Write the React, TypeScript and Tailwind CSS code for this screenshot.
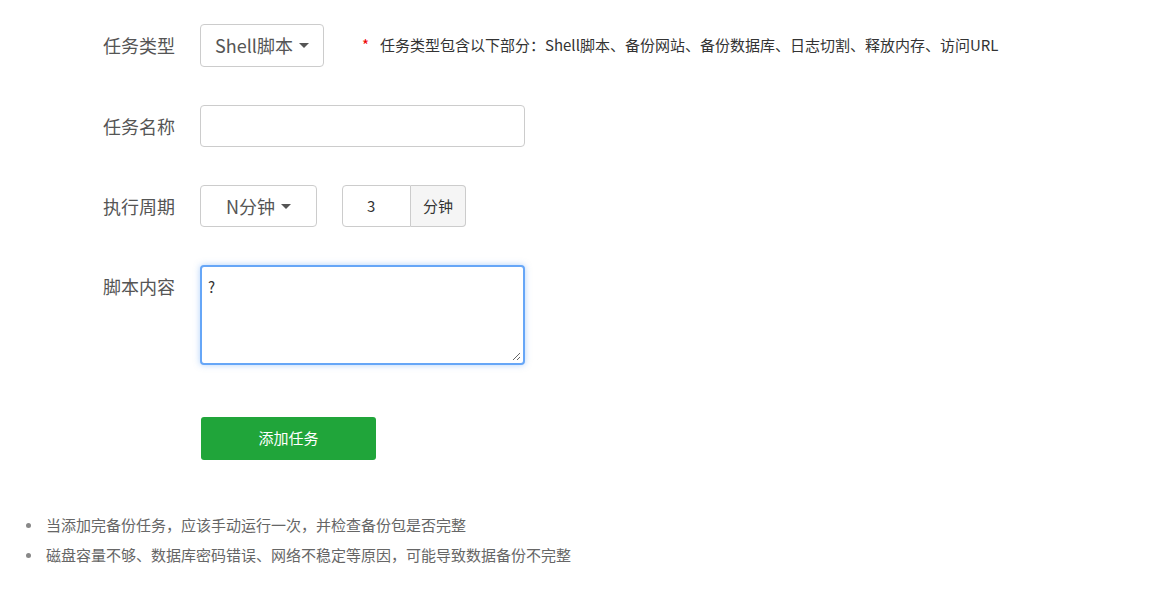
import React from "react";

const font = { fontFamily: '"Noto Sans CJK SC", "Noto Sans", sans-serif' };

function Caret() {
  return (
    <span className="ml-[6px] inline-block h-0 w-0 border-x-[5px] border-t-[5px] border-x-transparent border-t-[#555]" />
  );
}

function Label({ text }: { text: string }) {
  return (
    <div className="mr-[25px] flex h-[42px] w-[72px] shrink-0 items-center text-[18px] text-[#555]">
      {text}
    </div>
  );
}

export default function App() {
  return (
    <div className="min-h-[594px] w-full bg-white text-[#333]" style={font}>
      <div className="pl-[103px] pt-[24px]">
        {/* Row 1 */}
        <div className="flex items-center">
          <Label text="任务类型" />
          <div className="flex h-[43px] w-[124px] items-center justify-center rounded-[4px] border border-[#ccc] bg-white text-[18px] text-[#555]">
            Shell脚本
            <Caret />
          </div>
          <div className="ml-[38px] flex items-center text-[15px] text-[#333]">
            <span className="mr-[11px] text-[#e00]">*</span>
            任务类型包含以下部分：Shell脚本、备份网站、备份数据库、日志切割、释放内存、访问URL
          </div>
        </div>

        {/* Row 2 */}
        <div className="mt-[38px] flex items-center">
          <Label text="任务名称" />
          <div className="h-[42px] w-[325px] rounded-[4px] border border-[#ccc] bg-white" />
        </div>

        {/* Row 3 */}
        <div className="mt-[38px] flex items-center">
          <Label text="执行周期" />
          <div className="flex h-[42px] w-[117px] items-center justify-center rounded-[4px] border border-[#ccc] bg-white text-[18px] text-[#555]">
            N分钟
            <Caret />
          </div>
          <div className="ml-[25px] flex h-[42px]">
            <div className="flex w-[69px] items-center rounded-l-[4px] border border-[#ccc] bg-white pl-[24px] text-[15px] text-[#333]">
              3
            </div>
            <div className="flex w-[55px] items-center justify-center rounded-r-[4px] border border-l-0 border-[#ccc] bg-[#f5f5f5] text-[15px] text-[#333]">
              分钟
            </div>
          </div>
        </div>

        {/* Row 4 */}
        <div className="mt-[38px] flex items-start">
          <Label text="脚本内容" />
          <div className="relative h-[100px] w-[325px] rounded-[4px] border-2 border-[#66a6f7] bg-white px-[6px] pt-[9px] text-[15px] text-[#333] shadow-[0_0_6px_rgba(102,166,247,0.5)]">
            ?
            <svg className="absolute bottom-[2px] right-[2px]" width="9" height="9" viewBox="0 0 9 9">
              <line x1="8" y1="1" x2="1" y2="8" stroke="#666" strokeWidth="1" />
              <line x1="8" y1="5" x2="5" y2="8" stroke="#666" strokeWidth="1" />
            </svg>
          </div>
        </div>

        {/* Button */}
        <div className="ml-[98px] mt-[52px]">
          <div className="flex h-[43px] w-[175px] items-center justify-center rounded-[3px] bg-[#20a53a] text-[15px] text-white">
            添加任务
          </div>
        </div>
      </div>

      {/* Notes */}
      <ul className="mt-[50px] pl-[26px] text-[15px] text-[#666]">
        <li className="flex h-[30px] items-center">
          <span className="mr-[15px] inline-block h-[5px] w-[5px] rounded-full bg-[#888]" />
          当添加完备份任务，应该手动运行一次，并检查备份包是否完整
        </li>
        <li className="flex h-[30px] items-center">
          <span className="mr-[15px] inline-block h-[5px] w-[5px] rounded-full bg-[#888]" />
          磁盘容量不够、数据库密码错误、网络不稳定等原因，可能导致数据备份不完整
        </li>
      </ul>
    </div>
  );
}
